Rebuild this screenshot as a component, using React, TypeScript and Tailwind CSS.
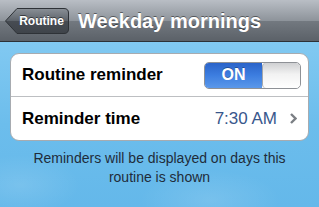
export default function App() {
  return (
    <div
      className="w-[319px] h-[207px] overflow-hidden flex flex-col bg-[radial-gradient(ellipse_60px_30px_at_20px_185px,rgba(255,255,255,0.12),transparent),radial-gradient(ellipse_70px_30px_at_210px_200px,rgba(255,255,255,0.12),transparent),linear-gradient(to_bottom,#8ccff4,#6cbdec_60%,#64b8ea)]"
      style={{ fontFamily: '"Liberation Sans", Arial, sans-serif' }}
    >
      {/* nav bar */}
      <div className="h-[42px] shrink-0 flex items-center gap-[9px] pl-[5px] border-b border-[#2d3136] bg-[linear-gradient(to_bottom,#b9bec5,#8e949b_50%,#737980_51%,#5b6168)]">
        <div className="relative w-[64px] h-[28px] flex items-center justify-center pl-[9px]">
          <svg className="absolute inset-0" width="64" height="28" viewBox="0 0 64 28">
            <defs>
              <linearGradient id="bb" x1="0" y1="0" x2="0" y2="1">
                <stop offset="0" stopColor="#8a9097" />
                <stop offset="0.5" stopColor="#5d636a" />
                <stop offset="0.51" stopColor="#474c53" />
                <stop offset="1" stopColor="#3f444a" />
              </linearGradient>
            </defs>
            <path
              d="M0.5 14 L12 1.5 H59 Q63.5 1.5 63.5 6 V22 Q63.5 26.5 59 26.5 H12 Z"
              fill="url(#bb)"
              stroke="#2e3237"
              strokeWidth="1"
            />
          </svg>
          <span className="relative text-white text-[12px] font-bold [text-shadow:0_-1px_0_rgba(0,0,0,0.5)]">
            Routine
          </span>
        </div>
        <span className="text-white text-[20px] font-bold [text-shadow:0_-1px_0_rgba(0,0,0,0.45)]">
          Weekday mornings
        </span>
      </div>

      {/* settings group */}
      <div className="mx-[10px] mt-[11px] rounded-[9px] border border-[#a7abb0] bg-white flex flex-col">
        <div className="h-[43px] flex items-center justify-between pl-[11px] pr-[7px] border-b border-[#bdbfc2]">
          <span className="text-[17px] font-bold text-black">Routine reminder</span>
          <div className="w-[97px] h-[27px] rounded-[5px] border border-[#8e9196] overflow-hidden flex">
            <div className="w-[57px] flex items-center justify-center bg-[linear-gradient(to_bottom,#2a63c9,#3d7ee0_50%,#5b98ea)] text-white text-[16px] font-bold [text-shadow:0_-1px_0_rgba(0,0,0,0.3)]">
              ON
            </div>
            <div className="flex-1 border-l border-[#a4a7ab] rounded-[4px] bg-[linear-gradient(to_bottom,#cfd0d2,#f2f2f2_45%,#ffffff)]" />
          </div>
        </div>
        <div className="h-[43px] flex items-center pl-[11px] pr-[11px]">
          <span className="text-[17px] font-bold text-black flex-1">Reminder time</span>
          <span className="text-[17px] text-[#38578c]">7:30 AM</span>
          <svg className="ml-[13px]" width="7" height="11" viewBox="0 0 7 11">
            <path d="M1 1 L5.5 5.5 L1 10" fill="none" stroke="#7b7f84" strokeWidth="2.4" />
          </svg>
        </div>
      </div>

      <p className="mt-[8px] px-[20px] text-center text-[14px] leading-[19px] text-[#1f2c3a]">
        Reminders will be displayed on days this routine is shown
      </p>
    </div>
  );
}
